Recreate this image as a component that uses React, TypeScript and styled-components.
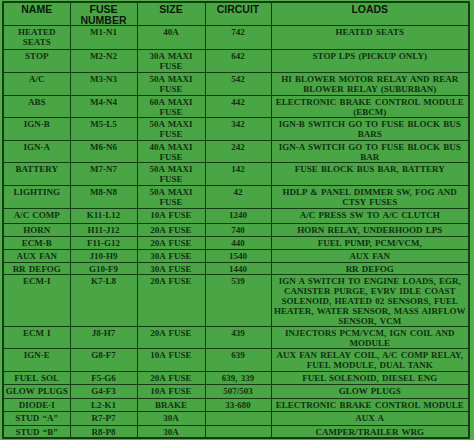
import React from 'react';
import styled, { createGlobalStyle } from 'styled-components';

const GlobalStyle = createGlobalStyle`
  html, body {
    margin: 0;
    padding: 0;
    background: #52ad4c;
  }
  #root {
    width: 474px;
    height: 440px;
    overflow: hidden;
  }
`;

const Page = styled.div`
  padding: 1px 0 0 2px;
`;

const Table = styled.table`
  border-collapse: collapse;
  table-layout: fixed;
  width: 468px;
  background: #4aa645;
  border: 2px solid #143d14;
`;

const Col = styled.col<{ $w?: number }>`
  width: ${(p) => (p.$w ? `${p.$w}px` : 'auto')};
`;

const HeadCell = styled.th`
  height: 20px;
  padding: 1px 0 0;
  border: 1px solid #143d14;
  vertical-align: top;
  text-align: center;
  font-family: 'Liberation Sans', Arial, sans-serif;
  font-weight: 700;
  font-size: 10.5px;
  line-height: 10.5px;
  color: #0b160b;
  white-space: nowrap;
`;

const Row = styled.tr<{ $h: number }>`
  height: ${(p) => p.$h}px;
`;

const Cell = styled.td`
  padding: 1px 0 0;
  border: 1px solid #143d14;
  vertical-align: top;
  text-align: center;
  font-family: 'Liberation Serif', 'Times New Roman', serif;
  font-weight: 700;
  font-size: 9px;
  line-height: 10px;
  color: #0f3212;
  white-space: nowrap;
  word-spacing: 1px;
  overflow: hidden;
`;

type Fuse = {
  name: string[];
  fuse: string;
  size: string[];
  circuit: string;
  loads: string[];
  h: number;
};

const rows: Fuse[] = [
  { name: ['HEATED', 'SEATS'], fuse: 'M1-N1', size: ['40A'], circuit: '742', loads: ['HEATED SEATS'], h: 24 },
  { name: ['STOP'], fuse: 'M2-N2', size: ['30A MAXI', 'FUSE'], circuit: '642', loads: ['STOP LPS (PICKUP ONLY)'], h: 23 },
  { name: ['A/C'], fuse: 'M3-N3', size: ['50A MAXI', 'FUSE'], circuit: '542', loads: ['HI BLOWER MOTOR RELAY AND REAR', 'BLOWER RELAY (SUBURBAN)'], h: 23 },
  { name: ['ABS'], fuse: 'M4-N4', size: ['60A MAXI', 'FUSE'], circuit: '442', loads: ['ELECTRONIC BRAKE CONTROL MODULE', '(EBCM)'], h: 22 },
  { name: ['IGN-B'], fuse: 'M5-L5', size: ['50A MAXI', 'FUSE'], circuit: '342', loads: ['IGN-B SWITCH GO TO FUSE BLOCK BUS', 'BARS'], h: 23 },
  { name: ['IGN-A'], fuse: 'M6-N6', size: ['40A MAXI', 'FUSE'], circuit: '242', loads: ['IGN-A SWITCH GO TO FUSE BLOCK BUS', 'BAR'], h: 22 },
  { name: ['BATTERY'], fuse: 'M7-N7', size: ['50A MAXI', 'FUSE'], circuit: '142', loads: ['FUSE BLOCK BUS BAR, BATTERY'], h: 23 },
  { name: ['LIGHTING'], fuse: 'M8-N8', size: ['50A MAXI', 'FUSE'], circuit: '42', loads: ['HDLP & PANEL DIMMER SW, FOG AND', 'CTSY FUSES'], h: 23 },
  { name: ['A/C COMP'], fuse: 'K11-L12', size: ['10A FUSE'], circuit: '1240', loads: ['A/C PRESS SW TO A/C CLUTCH'], h: 15 },
  { name: ['HORN'], fuse: 'H11-J12', size: ['20A FUSE'], circuit: '740', loads: ['HORN RELAY, UNDERHOOD LPS'], h: 13 },
  { name: ['ECM-B'], fuse: 'F11-G12', size: ['20A FUSE'], circuit: '440', loads: ['FUEL PUMP, PCM/VCM,'], h: 13 },
  { name: ['AUX FAN'], fuse: 'J10-H9', size: ['30A FUSE'], circuit: '1540', loads: ['AUX FAN'], h: 13 },
  { name: ['RR DEFOG'], fuse: 'G10-F9', size: ['30A FUSE'], circuit: '1440', loads: ['RR DEFOG'], h: 12 },
  {
    name: ['ECM-I'],
    fuse: 'K7-L8',
    size: ['20A FUSE'],
    circuit: '539',
    loads: [
      'IGN A SWITCH TO ENGINE LOADS, EGR,',
      'CANISTER PURGE, EVRV IDLE COAST',
      'SOLENOID, HEATED 02 SENSORS, FUEL',
      'HEATER, WATER SENSOR, MASS AIRFLOW',
      'SENSOR, VCM',
    ],
    h: 52,
  },
  { name: ['ECM I'], fuse: 'J8-H7', size: ['20A FUSE'], circuit: '439', loads: ['INJECTORS PCM/VCM, IGN COIL AND', 'MODULE'], h: 22 },
  { name: ['IGN-E'], fuse: 'G8-F7', size: ['10A FUSE'], circuit: '639', loads: ['AUX FAN RELAY COIL, A/C COMP RELAY,', 'FUEL MODULE, DUAL TANK'], h: 23 },
  { name: ['FUEL SOL'], fuse: 'F5-G6', size: ['20A FUSE'], circuit: '639, 339', loads: ['FUEL SOLENOID, DIESEL ENG'], h: 13 },
  { name: ['GLOW PLUGS'], fuse: 'G4-F3', size: ['10A FUSE'], circuit: '507/503', loads: ['GLOW PLUGS'], h: 14 },
  { name: ['DIODE-I'], fuse: 'L2-K1', size: ['BRAKE'], circuit: '33-680', loads: ['ELECTRONIC BRAKE CONTROL MODULE'], h: 13 },
  { name: ['STUD \u201CA\u201D'], fuse: 'R7-P7', size: ['30A'], circuit: '', loads: ['AUX A'], h: 14 },
  { name: ['STUD \u201CB\u201D'], fuse: 'R8-P8', size: ['30A'], circuit: '', loads: ['CAMPER/TRAILER WRG'], h: 12 },
];

function Lines({ lines }: { lines: string[] }) {
  return (
    <>
      {lines.map((l, i) => (
        <React.Fragment key={i}>
          {i > 0 && <br />}
          {l}
        </React.Fragment>
      ))}
    </>
  );
}

export default function App() {
  return (
    <>
      <GlobalStyle />
      <Page>
        <Table>
          <colgroup>
            <Col $w={67} />
            <Col $w={67} />
            <Col $w={68} />
            <Col $w={66} />
            <Col />
          </colgroup>
          <thead>
            <tr>
              <HeadCell>NAME</HeadCell>
              <HeadCell>
                FUSE
                <br />
                NUMBER
              </HeadCell>
              <HeadCell>SIZE</HeadCell>
              <HeadCell>CIRCUIT</HeadCell>
              <HeadCell>LOADS</HeadCell>
            </tr>
          </thead>
          <tbody>
            {rows.map((r, i) => (
              <Row key={i} $h={r.h}>
                <Cell>
                  <Lines lines={r.name} />
                </Cell>
                <Cell>{r.fuse}</Cell>
                <Cell>
                  <Lines lines={r.size} />
                </Cell>
                <Cell>{r.circuit}</Cell>
                <Cell>
                  <Lines lines={r.loads} />
                </Cell>
              </Row>
            ))}
          </tbody>
        </Table>
      </Page>
    </>
  );
}
